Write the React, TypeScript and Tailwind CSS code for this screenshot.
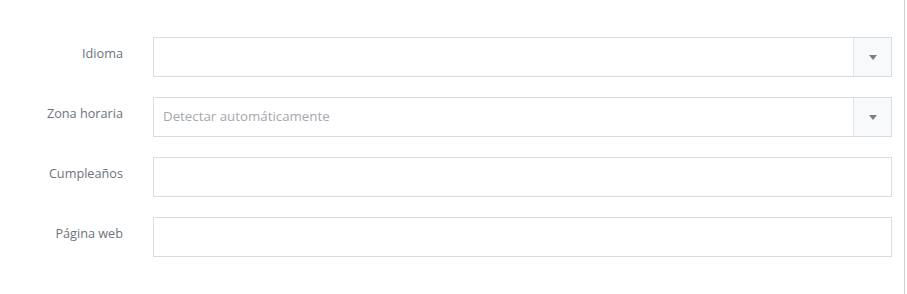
import { ReactNode } from 'react'

function Caret() {
  return (
    <svg width="8" height="5" viewBox="0 0 8 5">
      <path d="M0 0h8L4 5z" fill="#7a7d85" />
    </svg>
  )
}

function Row({ label, children }: { label: string; children: ReactNode }) {
  return (
    <div className="flex items-start">
      <label className="w-[123px] shrink-0 pt-[7px] text-right text-[12.7px] text-[#6c737e]">{label}</label>
      <div className="ml-[30px] flex-1">{children}</div>
    </div>
  )
}

function Select({ placeholder }: { placeholder?: string }) {
  return (
    <div className="flex h-10 border border-[#dadce3] bg-white">
      <div className="flex flex-1 items-center px-[9px] text-[13.3px] text-[#a5a8ae]">{placeholder}</div>
      <div className="flex w-[38px] items-center justify-center border-l border-[#e3e5ea] bg-[#f8f9fa]">
        <Caret />
      </div>
    </div>
  )
}

function Input() {
  return <div className="h-10 border border-[#dadce3] bg-white" />
}

export default function App() {
  return (
    <div className="h-[294px] w-[907px] bg-white font-['Open_Sans',sans-serif]">
      <div className="h-full w-[905px] border-r border-[#c9d3de]">
        <div className="flex flex-col gap-5 pt-[37px] pr-[12px]">
          <Row label="Idioma">
            <Select />
          </Row>
          <Row label="Zona horaria">
            <Select placeholder="Detectar automáticamente" />
          </Row>
          <Row label="Cumpleaños">
            <Input />
          </Row>
          <Row label="Página web">
            <Input />
          </Row>
        </div>
      </div>
    </div>
  )
}
